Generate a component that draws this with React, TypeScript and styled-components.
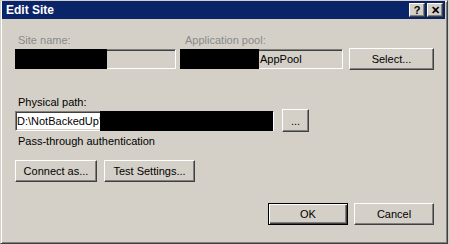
import styled, { createGlobalStyle, css } from 'styled-components';

const GlobalStyle = createGlobalStyle`
  html, body {
    margin: 0;
    padding: 0;
    background: #d4d0c8;
  }
  body {
    font-family: "Liberation Sans", Arial, sans-serif;
    font-size: 11px;
  }
`;

const Window = styled.div`
  width: 448px;
  height: 244px;
  box-sizing: border-box;
  background: #d4d0c8;
  border-top: 1px solid #d4d0c8;
  border-left: 1px solid #d4d0c8;
  border-right: 1px solid #404040;
  border-bottom: 1px solid #404040;
  box-shadow: inset 1px 1px #ffffff, inset -1px -1px #808080;
  padding: 0 2px 2px 1px;
  display: flex;
  flex-direction: column;
`;

const TitleBar = styled.div`
  height: 18px;
  background: #0a246a;
  display: flex;
  align-items: center;
  justify-content: space-between;
  padding: 0 2px 0 4px;
  color: #ffffff;
  font-weight: bold;
  font-size: 12px;
`;

const TitleButtons = styled.div`
  display: flex;
  gap: 2px;
`;

const TitleButton = styled.div`
  width: 16px;
  height: 14px;
  box-sizing: border-box;
  background: #d4d0c8;
  color: #000;
  border-top: 1px solid #fff;
  border-left: 1px solid #fff;
  border-right: 1px solid #404040;
  border-bottom: 1px solid #404040;
  box-shadow: inset -1px -1px #808080;
  display: flex;
  align-items: center;
  justify-content: center;
  font-weight: bold;
  font-size: 11px;
  line-height: 1;
`;

const Content = styled.div`
  flex: 1;
  display: flex;
  flex-direction: column;
  padding: 15px 11px 0 13px;
`;

const Row = styled.div<{ $top?: number; $gap?: number; $end?: boolean }>`
  display: flex;
  align-items: flex-end;
  margin-top: ${(p) => p.$top ?? 0}px;
  gap: ${(p) => p.$gap ?? 0}px;
  justify-content: ${(p) => (p.$end ? 'flex-end' : 'flex-start')};
`;

const Field = styled.div<{ $w: number }>`
  display: flex;
  flex-direction: column;
  width: ${(p) => p.$w}px;
  gap: 2px;
`;

const Label = styled.div<{ $disabled?: boolean; $indent?: number }>`
  line-height: 13px;
  padding-left: ${(p) => p.$indent ?? 3}px;
  color: ${(p) => (p.$disabled ? '#8a8a8a' : '#000')};
`;

const TextBox = styled.div<{ $disabled?: boolean }>`
  height: 20px;
  box-sizing: border-box;
  width: 100%;
  background: ${(p) => (p.$disabled ? '#d4d0c8' : '#ffffff')};
  border-top: 1px solid #808080;
  border-left: 1px solid #808080;
  border-right: 1px solid #ffffff;
  border-bottom: 1px solid #ffffff;
  box-shadow: inset 1px 1px #404040, inset -1px -1px #d4d0c8;
  display: flex;
  align-items: center;
  line-height: 13px;
  white-space: nowrap;
`;

const Redaction = styled.span<{ $w: number; $grow?: boolean }>`
  display: block;
  background: #000;
  width: ${(p) => p.$w}px;
  flex: ${(p) => (p.$grow ? '1' : 'none')};
  align-self: stretch;
  margin: -1px 0 -1px -1px;
`;

const BoxText = styled.span`
  padding-left: 1px;
`;

const Button = styled.div<{ $w: number; $h?: number; $default?: boolean }>`
  width: ${(p) => p.$w}px;
  height: ${(p) => p.$h ?? 22}px;
  box-sizing: border-box;
  background: #d4d0c8;
  display: flex;
  align-items: center;
  justify-content: center;
  color: #000;
  flex: none;
  ${(p) =>
    p.$default
      ? css`
          border: 1px solid #000;
          box-shadow: inset 1px 1px #fff, inset -1px -1px #404040,
            inset -2px -2px #808080;
        `
      : css`
          border-top: 1px solid #fff;
          border-left: 1px solid #fff;
          border-right: 1px solid #404040;
          border-bottom: 1px solid #404040;
          box-shadow: inset -1px -1px #808080;
        `}
`;

const SideButton = styled(Button)`
  margin-bottom: -1px;
`;

const Note = styled.div`
  line-height: 13px;
  margin-top: 4px;
  padding-left: 3px;
`;

export default function App() {
  return (
    <>
      <GlobalStyle />
      <Window>
        <TitleBar>
          <span>Edit Site</span>
          <TitleButtons>
            <TitleButton>?</TitleButton>
            <TitleButton>✕</TitleButton>
          </TitleButtons>
        </TitleBar>

        <Content>
          <Row $gap={4}>
            <Field $w={161}>
              <Label $disabled>Site name:</Label>
              <TextBox $disabled>
                <Redaction $w={92} />
              </TextBox>
            </Field>
            <Field $w={163}>
              <Label $disabled $indent={5}>Application pool:</Label>
              <TextBox $disabled>
                <Redaction $w={79} />
                <BoxText>AppPool</BoxText>
              </TextBox>
            </Field>
            <SideButton $w={85} style={{ marginLeft: 2 }}>
              Select...
            </SideButton>
          </Row>

          <Row $top={27} $gap={8}>
            <Field $w={259}>
              <Label>Physical path:</Label>
              <TextBox>
                <BoxText>D:\NotBackedUp'</BoxText>
                <Redaction $w={0} $grow />
              </TextBox>
            </Field>
            <SideButton $w={27} $h={23}>
              ...
            </SideButton>
          </Row>

          <Note>Pass-through authentication</Note>

          <Row $top={12} $gap={7}>
            <Button $w={82}>Connect as...</Button>
            <Button $w={91}>Test Settings...</Button>
          </Row>

          <Row $top={21} $gap={6} $end>
            <Button $w={80} $default>
              OK
            </Button>
            <Button $w={80}>Cancel</Button>
          </Row>
        </Content>
      </Window>
    </>
  );
}
